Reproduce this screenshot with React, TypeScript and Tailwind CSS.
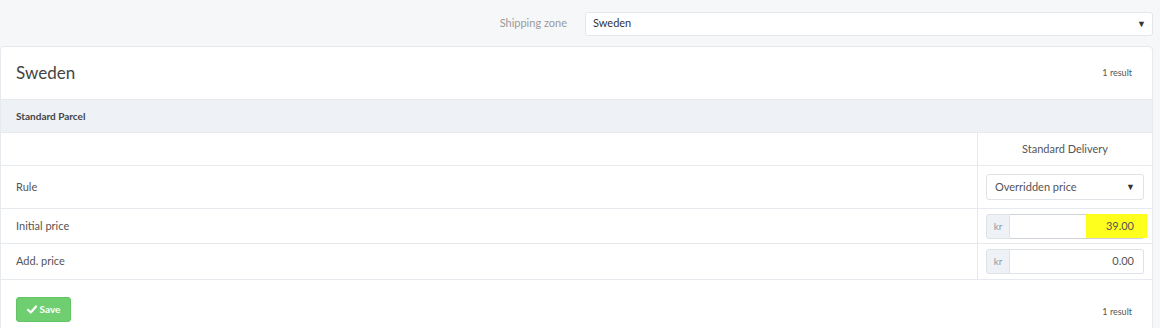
import React from "react";

export default function App() {
  return (
    <div className="w-[1160px] h-[328px] overflow-hidden bg-[#f6f7f9] font-['Lato',sans-serif] text-[#444]">
      {/* top bar */}
      <div className="flex items-center justify-end h-[46px] pr-[7px] pt-[1px]">
        <span className="text-[11px] text-[#9a9a9a] mr-[18px]">Shipping zone</span>
        <div className="w-[568px] h-[24px] bg-white border border-[#e3e7ec] rounded-[3px] flex items-center justify-between pl-[7px] pr-[6px]">
          <span className="text-[11px] text-[#333]">Sweden</span>
          <span className="text-[9px] text-[#333]">▼</span>
        </div>
      </div>

      {/* card */}
      <div className="mr-[7px] bg-white border border-[#e6e9ee] rounded-t-[4px]">
        <div className="flex items-center justify-between h-[53px] px-[15px] border-b border-[#e6e9ee]">
          <span className="text-[17px] text-[#444]">Sweden</span>
          <span className="text-[9px] text-[#555] mr-[5px]">1 result</span>
        </div>
        <div className="h-[33px] bg-[#eef2f6] border-b border-[#e6e9ee] flex items-center px-[15px]">
          <span className="text-[10px] font-bold text-[#444]">Standard Parcel</span>
        </div>
        <div className="flex h-[33px] border-b border-[#e6e9ee]">
          <div className="flex-1" />
          <div className="w-[175px] border-l border-[#e6e9ee] flex items-center justify-center">
            <span className="text-[11px] text-[#555]">Standard Delivery</span>
          </div>
        </div>
        <div className="flex h-[43px] border-b border-[#e6e9ee]">
          <div className="flex-1 flex items-center px-[15px] text-[11px] text-[#555]">Rule</div>
          <div className="w-[175px] border-l border-[#e6e9ee] flex items-center pl-[8px]">
            <div className="w-[158px] h-[26px] border border-[#dfe3e8] rounded-[3px] flex items-center justify-between pl-[8px] pr-[8px]">
              <span className="text-[11px] text-[#555]">Overridden price</span>
              <span className="text-[9px] text-[#333]">▼</span>
            </div>
          </div>
        </div>
        <div className="flex h-[35px] border-b border-[#e6e9ee]">
          <div className="flex-1 flex items-center px-[15px] text-[11px] text-[#555]">Initial price</div>
          <div className="w-[175px] border-l border-[#e6e9ee] flex items-center pl-[8px]">
            <div className="flex h-[25px] w-[158px]">
              <div className="w-[24px] bg-[#eef2f6] border border-[#dfe3e8] rounded-l-[3px] flex items-center justify-center text-[10px] text-[#999]">kr</div>
              <div className="relative flex-1 border border-l-0 border-[#cfd4da] rounded-r-[3px] flex items-center justify-end pr-[9px]">
                <div className="absolute right-[-4px] top-[-1px] w-[61px] h-[24px] bg-[#ffff1e]" />
                <span className="relative text-[11px] text-[#555]">39.00</span>
              </div>
            </div>
          </div>
        </div>
        <div className="flex h-[36px] border-b border-[#e6e9ee]">
          <div className="flex-1 flex items-center px-[15px] text-[11px] text-[#555]">Add. price</div>
          <div className="w-[175px] border-l border-[#e6e9ee] flex items-center pl-[8px]">
            <div className="flex h-[25px] w-[158px]">
              <div className="w-[24px] bg-[#eef2f6] border border-[#dfe3e8] rounded-l-[3px] flex items-center justify-center text-[10px] text-[#999]">kr</div>
              <div className="flex-1 border border-l-0 border-[#dfe3e8] rounded-r-[3px] flex items-center justify-end pr-[9px]">
                <span className="text-[11px] text-[#555]">0.00</span>
              </div>
            </div>
          </div>
        </div>
        <div className="flex items-start justify-between px-[15px] pt-[17px] h-[60px]">
          <button className="w-[55px] h-[25px] bg-[#6fcf70] border border-[#62c463] rounded-[3px] text-white text-[10px] font-bold flex items-center justify-center gap-[3px]">
            <svg width="10" height="9" viewBox="0 0 10 9"><path d="M1 4.8 L3.8 7.5 L9 1.5" stroke="white" strokeWidth="2.2" fill="none" strokeLinecap="round" strokeLinejoin="round" /></svg>
            Save
          </button>
          <span className="text-[9px] text-[#555] mr-[5px] mt-[8px]">1 result</span>
        </div>
      </div>
    </div>
  );
}
